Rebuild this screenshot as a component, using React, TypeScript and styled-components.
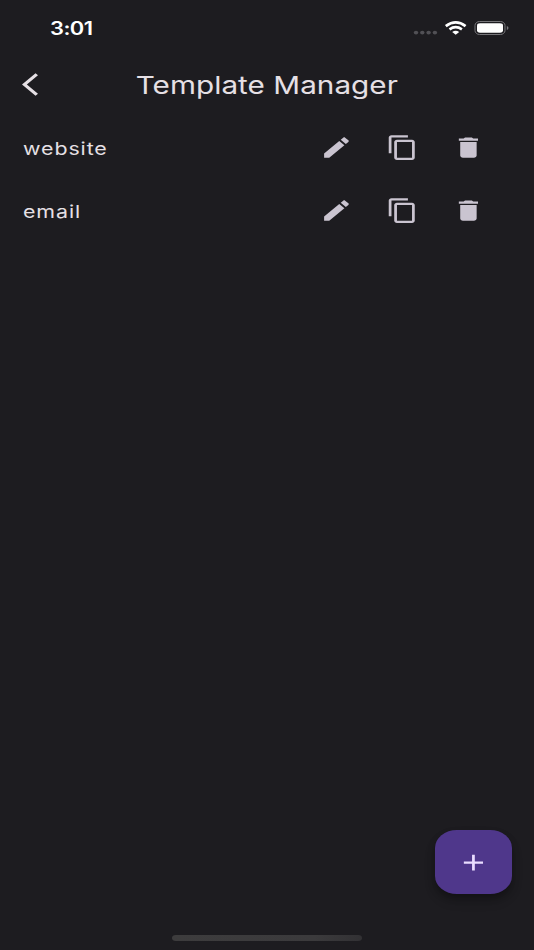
import React from "react";
import styled, { createGlobalStyle } from "styled-components";

const GlobalStyle = createGlobalStyle`
  * { box-sizing: border-box; }
  body { margin: 0; background: #1d1c20; font-family: Inter, Roboto, sans-serif; }
`;

const Screen = styled.main`
  position: relative;
  display: flex;
  flex-direction: column;
  width: 534px;
  height: 950px;
  overflow: hidden;
  background: #1d1c20;
  color: #e6e0e5;
`;

const StatusBar = styled.header`
  display: flex;
  align-items: center;
  justify-content: space-between;
  height: 53px;
  padding: 3px 25px 0 49.5px;
`;

const Wide = styled.span<{ $origin?: string }>`
  display: inline-block;
  white-space: nowrap;
  transform: scaleX(1.216);
  transform-origin: ${(p) => p.$origin ?? "left"} center;
`;

const Clock = styled(Wide)`
  padding-top: 2px;
  color: #fff;
  font-size: 18px;
  line-height: 24px;
  font-weight: 600;
  letter-spacing: -0.45px;
`;

const StatusIcons = styled.div`
  display: flex;
  align-items: center;
  height: 24px;
`;

const TitleBar = styled.div`
  display: grid;
  grid-template-columns: 62px 1fr 62px;
  align-items: center;
  height: 63px;
`;

const Title = styled.h1`
  margin: 0;
  text-align: center;
  font-size: 24.4px;
  line-height: 32px;
  font-weight: 400;
  letter-spacing: 0.04px;
`;

const IconButton = styled.button<{ $back?: boolean }>`
  display: flex;
  align-items: center;
  justify-content: ${(p) => (p.$back ? "flex-start" : "center")};
  width: ${(p) => (p.$back ? "62px" : "65.7px")};
  height: 54px;
  padding: 0 0 0 ${(p) => (p.$back ? "22.3px" : "0")};
  border: 0;
  background: none;
  color: ${(p) => (p.$back ? "#e6e0e5" : "#cac4d0")};
`;

const List = styled.ul`
  margin: 0;
  padding: 0;
  list-style: none;
`;

const Row = styled.li`
  display: flex;
  align-items: center;
  justify-content: space-between;
  height: 63px;
  padding: 0 33px 0 23px;
`;

const Label = styled(Wide)`
  padding-top: 2px;
  font-size: 17.6px;
  line-height: 24px;
  font-weight: 400;
  letter-spacing: 0.74px;
`;

const Actions = styled.div`
  display: flex;
  padding-top: 0.5px;
`;

const Fab = styled.button`
  position: absolute;
  right: 22px;
  bottom: 56px;
  display: flex;
  align-items: center;
  justify-content: center;
  width: 77px;
  height: 64px;
  padding: 0;
  border: 0;
  border-radius: 22px / 18px;
  background: #4f378b;
  color: #eaddff;
  box-shadow: 0 4px 7px rgba(0, 0, 0, 0.25), 0 7px 12px rgba(0, 0, 0, 0.14);
`;

const HomeIndicator = styled.div`
  width: 190px;
  height: 6px;
  margin: auto auto 9px 172px;
  border-radius: 4px / 3px;
  background: linear-gradient(100deg, #3d3c3d, #3b3a3c 75%, #323134);
`;

const ICONS = {
  back: "M11.67 3.87L9.9 2.1 0 12l9.9 9.9 1.77-1.77L3.54 12z",
  edit: "M3 17.25V21h3.75L17.81 9.94l-3.75-3.75L3 17.25zM20.71 7.04c.39-.39.39-1.02 0-1.41l-2.34-2.34c-.39-.39-1.02-.39-1.41 0l-1.83 1.83 3.75 3.75 1.83-1.83z",
  copy: "M16 1H4c-1.1 0-2 .9-2 2v14h2V3h12V1zm3 4H8c-1.1 0-2 .9-2 2v14c0 1.1.9 2 2 2h11c1.1 0 2-.9 2-2V7c0-1.1-.9-2-2-2zm0 16H8V7h11v14z",
  trash: "M6 19c0 1.1.9 2 2 2h8c1.1 0 2-.9 2-2V7H6v12zM19 4h-3.5l-1-1h-5l-1 1H5v2h14V4z",
  add: "M19 13h-6v6h-2v-6H5v-2h6V5h2v6h6v2z",
};

function Icon({ name }: { name: keyof typeof ICONS }) {
  return (
    <svg width="32.86" height="27" viewBox="0 0 24 24" preserveAspectRatio="none" fill="currentColor" aria-hidden="true">
      <path d={ICONS[name]} />
    </svg>
  );
}

function StatusGlyphs() {
  return (
    <svg width="97" height="20" viewBox="412 18 97 20" aria-hidden="true">
      <g fill="#515055">
        {[416, 422.3, 428.6, 434.9].map((x) => (
          <ellipse key={x} cx={x} cy="32.6" rx="2.2" ry="1.9" />
        ))}
      </g>
      <g fill="none" stroke="#fff">
        <path d="M445.8 26.1 Q455.7 18.6 465.6 26.1" strokeWidth="2.7" />
        <path d="M449.5 29.4 Q455.7 25 461.9 29.4" strokeWidth="2.6" />
      </g>
      <path d="M452.2 32 Q455.7 29.6 459.2 32 L455.7 34.8z" fill="#fff" />
      <rect x="475" y="21.5" width="30" height="13" rx="4.6" ry="3.9" fill="none" stroke="#77767a" />
      <rect x="477" y="23.2" width="26" height="9.5" rx="3" ry="2.4" fill="#fff" />
      <path d="M506.8 26 Q508.5 26.6 508.5 28 Q508.5 29.4 506.8 30z" fill="#77767a" />
    </svg>
  );
}

const templates = ["website", "email"];

export default function App() {
  return (
    <>
      <GlobalStyle />
      <Screen>
        <StatusBar>
          <Clock>3:01</Clock>
          <StatusIcons><StatusGlyphs /></StatusIcons>
        </StatusBar>
        <TitleBar>
          <IconButton $back aria-label="Back"><Icon name="back" /></IconButton>
          <Title><Wide $origin="center">Template Manager</Wide></Title>
        </TitleBar>
        <List>
          {templates.map((name) => (
            <Row key={name}>
              <Label>{name}</Label>
              <Actions>
                <IconButton aria-label={`Edit ${name}`}><Icon name="edit" /></IconButton>
                <IconButton aria-label={`Copy ${name}`}><Icon name="copy" /></IconButton>
                <IconButton aria-label={`Delete ${name}`}><Icon name="trash" /></IconButton>
              </Actions>
            </Row>
          ))}
        </List>
        <HomeIndicator />
        <Fab aria-label="Add template"><Icon name="add" /></Fab>
      </Screen>
    </>
  );
}
